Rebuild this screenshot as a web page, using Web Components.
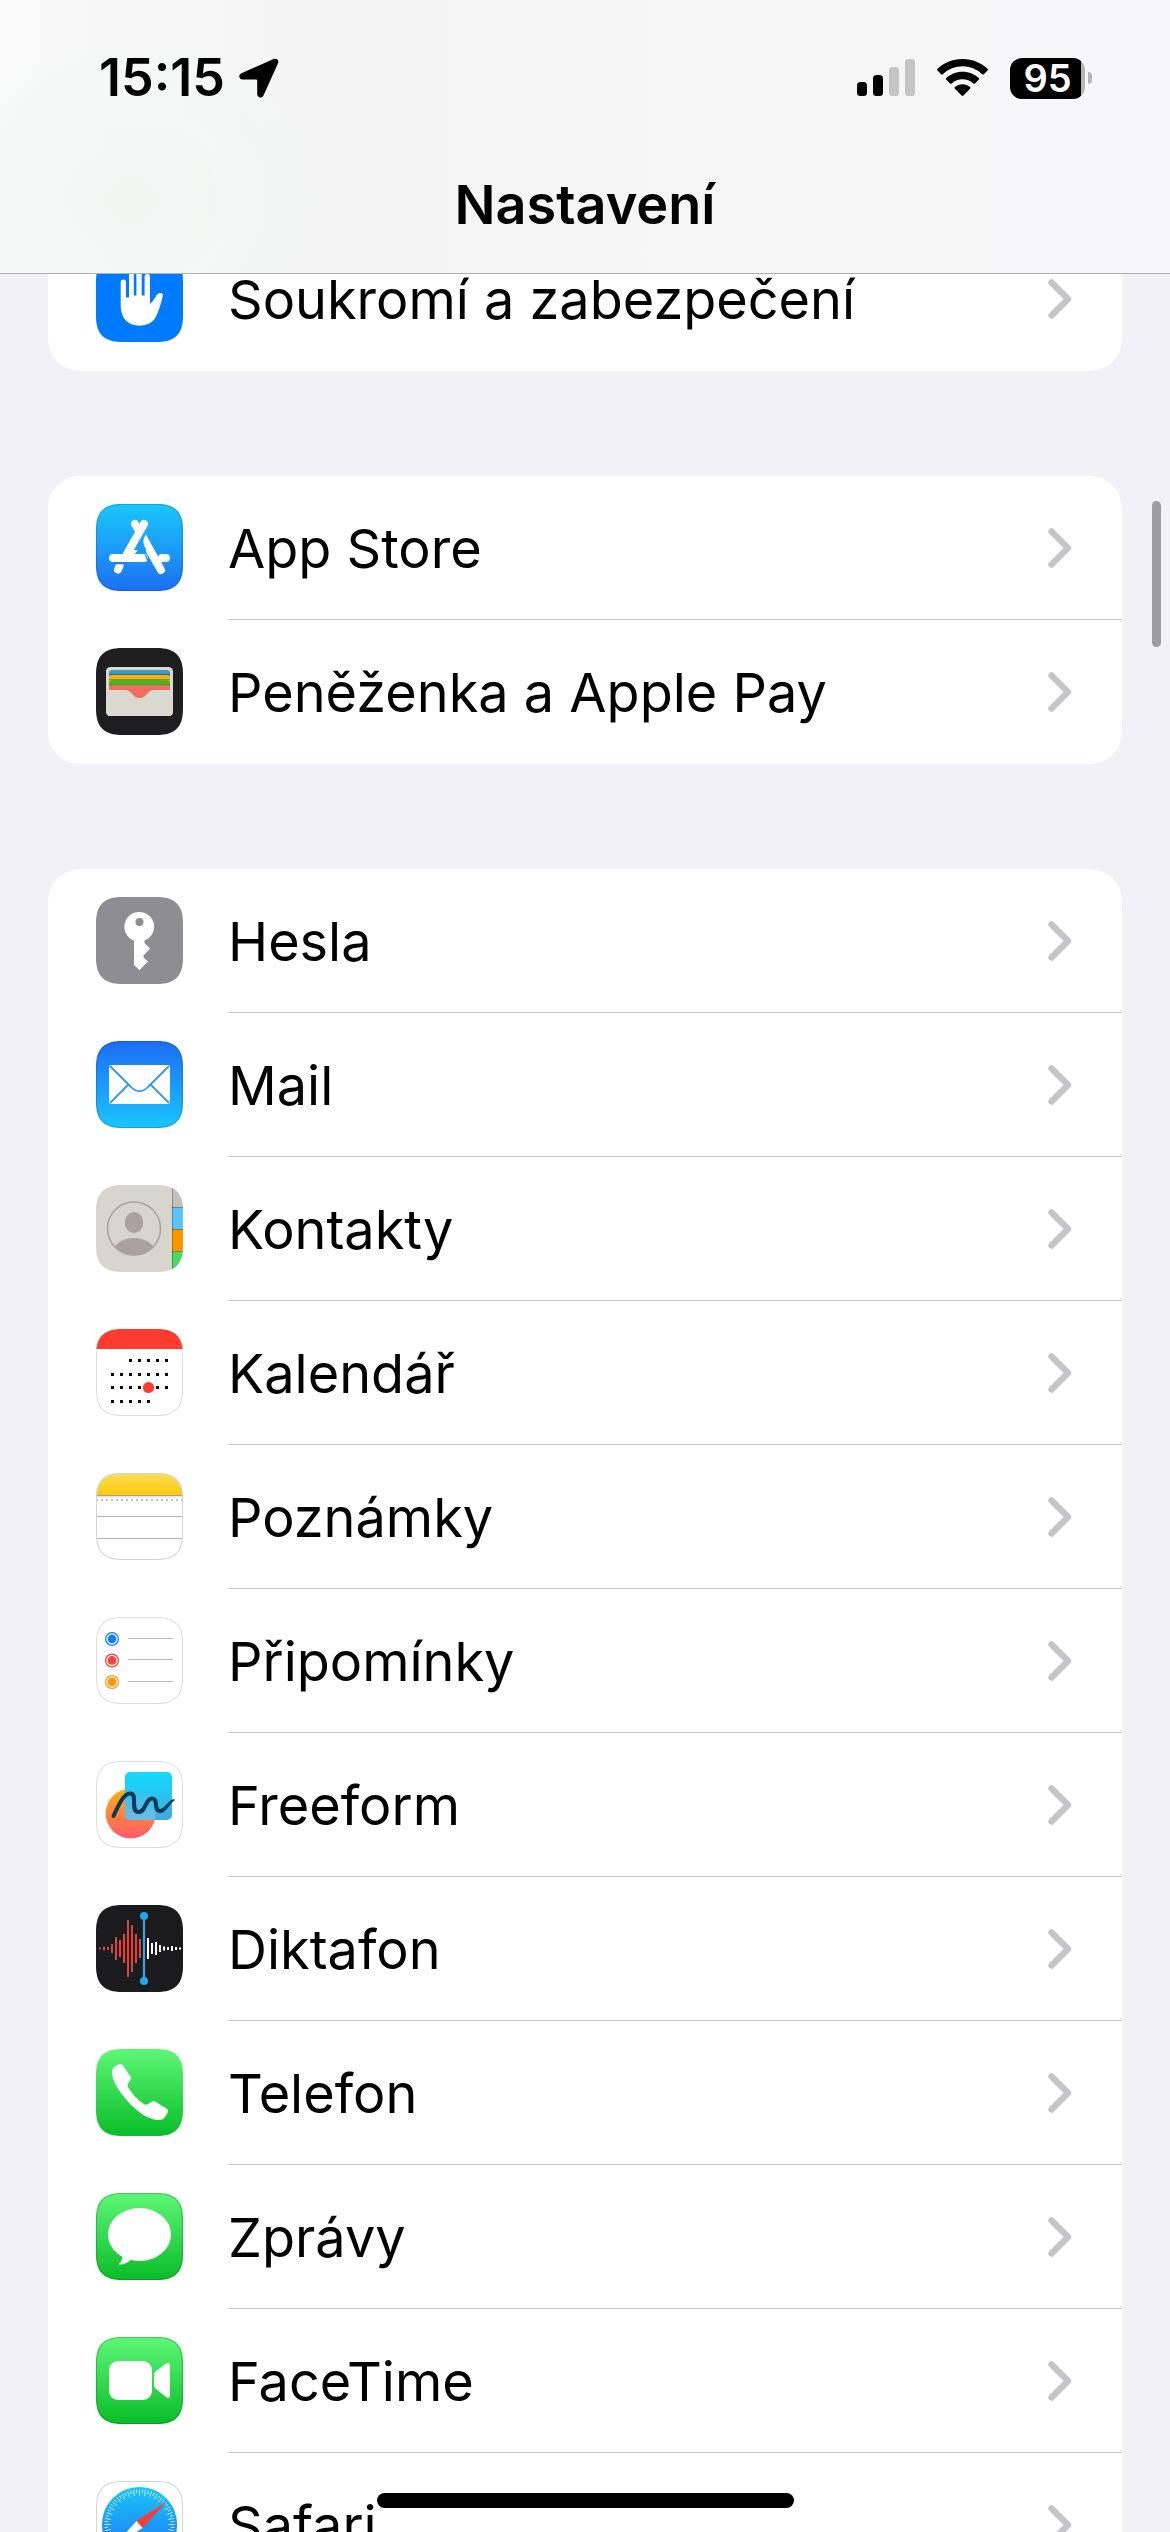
<!DOCTYPE html>
<html lang="cs">
<head>
<meta charset="utf-8">
<meta name="viewport" content="width=device-width, initial-scale=1">
<title>Nastavení</title>
<style>
  html, body { margin: 0; height: 100%; }
  body { background: #f2f1f8; color: #000; font-family: Inter, "Liberation Sans", sans-serif; overflow: hidden; }
</style>
</head>
<body>
<settings-screen>
  <status-bar slot="status" time="15:15" battery="95"></status-bar>
  <span slot="title">Nastavení</span>
  <settings-group>
    <settings-row icon="privacy">Soukromí a zabezpečení</settings-row>
  </settings-group>
  <settings-group>
    <settings-row icon="appstore">App Store</settings-row>
    <settings-row icon="wallet">Peněženka a Apple Pay</settings-row>
  </settings-group>
  <settings-group>
    <settings-row icon="passwords">Hesla</settings-row>
    <settings-row icon="mail">Mail</settings-row>
    <settings-row icon="contacts">Kontakty</settings-row>
    <settings-row icon="calendar">Kalendář</settings-row>
    <settings-row icon="notes">Poznámky</settings-row>
    <settings-row icon="reminders">Připomínky</settings-row>
    <settings-row icon="freeform">Freeform</settings-row>
    <settings-row icon="voice">Diktafon</settings-row>
    <settings-row icon="phone">Telefon</settings-row>
    <settings-row icon="messages">Zprávy</settings-row>
    <settings-row icon="facetime">FaceTime</settings-row>
    <settings-row icon="safari">Safari</settings-row>
  </settings-group>
</settings-screen>

<script>
const grad = (id, a, b) => `<linearGradient id="${id}" x1="0" y1="0" x2="0" y2="1"><stop stop-color="${a}"/><stop offset="1" stop-color="${b}"/></linearGradient>`;
const fill = c => `<rect width="87" height="87" fill="${c}"/>`;
const gfill = (a, b) => `<defs>${grad('bg', a, b)}</defs>${fill('url(#bg)')}`;

// Calendar day dots: [row y, first column, last column]
const dots = [[32, 2, 6], [46, 0, 6], [59, 0, 6], [73, 0, 4]]
  .map(([y, a, b]) => Array.from({ length: b - a + 1 }, (_, i) => `<rect x="${15 + (a + i) * 9}" y="${y - 2}" width="3" height="3"/>`).join('')).join('');

// Waveform bars, four units apart
const wave = (x0, halves, c) => halves.map((h, i) => `<rect x="${x0 + i * 4 - 1}" y="${43.5 - h}" width="2" height="${h * 2}" fill="${c}"/>`).join('');

const ticks = Array.from({ length: 72 }, (_, i) => {
  const a = i * Math.PI / 36, r = i % 2 ? 31.5 : 29;
  return `M${(43.5 + r * Math.cos(a)).toFixed(2)} ${(43.5 + r * Math.sin(a)).toFixed(2)}L${(43.5 + 35 * Math.cos(a)).toFixed(2)} ${(43.5 + 35 * Math.sin(a)).toFixed(2)}`;
}).join('');

const reminder = (y, c) => `<circle cx="16" cy="${y}" r="6.4" fill="none" stroke="${c}" stroke-width="1.3"/><circle cx="16" cy="${y}" r="4.4" fill="${c}"/><path d="M32 ${Math.floor(y) - .5}H77" stroke="#bcbcbe" stroke-width="1"/>`;

const ICONS = {
  privacy: { art: fill('#007aff') + `<path fill="#fff" d="M24.700 27.300Q24.700 24.600 27.300 24.600T30 27.300V42.500H33V18Q33 15.500 35.400 15.500T37.800 18V40.500H40.400V15.500Q40.400 13 43 13T45.700 15.500V40.500H48.600V21.500Q48.600 19 51.300 19T54 21.500V48.500C56.500 47.500 58 44 61 39.500Q63 37.300 65.400 38.300T66.500 42C65 49 62.500 56 60.300 61Q56 70.700 43.500 70.700C31.500 70.700 24.700 62.500 24.700 51Z"/>` },
  appstore: { edge: 'rgba(0,50,110,.25)', art: gfill('#1ac8fc', '#1d6ff2') + `<g fill="none" stroke="#fff" stroke-width="8" stroke-linecap="round"><path d="M48 20L31 50M39 20L43 26.500M17 54H48M66 54H70M65 66L54 46.500M23.500 62L22 65.500"/></g>
    <path fill="#fff" d="M30 46H42L37 52H26ZM50 30.500Q46 36 48 41L58 62L66 60Z"/><path d="M52.500 58L49.500 51" stroke="#1f8df7" stroke-width="1.5"/><path d="M17.500 59.200H30" stroke="#1f7ff5" stroke-width="2.200"/>` },
  wallet: { art: fill('#1e1e20') + `<rect x="10" y="19" width="67" height="49" rx="4.500" fill="#dad9cf"/>
    <path fill="#3b99c9" d="M13 42V25Q13 22 16 22H71Q74 22 74 25V42Z"/><path fill="#2f6e73" d="M13 26H74V27H13Z"/>
    <path fill="#ffb10a" d="M13 42V30Q13 27 16 27H71Q74 27 74 30V42Z"/><path fill="#a5881b" d="M13 31H74V32H13Z"/>
    <path fill="#4ab32d" d="M13 42V35Q13 32 16 32H71Q74 32 74 35V42Z"/><path fill="#8d7d2f" d="M13 36H74V37H13Z"/>
    <path fill="#f06d60" d="M13 42V40Q13 37.500 16 37.500H71Q74 37.500 74 40V52H13Z"/>
    <path fill="#dad9cf" d="M10 42H29C36 42 36 50 43.500 50S51 42 58 42H77V63.500Q77 68 72.500 68H14.500Q10 68 10 63.500Z"/>` },
  passwords: { art: fill('#8e8d94') + `<path fill="#fff" fill-rule="evenodd" d="M43.500 15A14.700 14.700 0 0 0 38 43.500V68L43.500 73L52 64.500L47.500 60.500V58.500L54 51.500L48.500 46V43.500A14.700 14.700 0 0 0 43.500 15ZM43.500 21A4 4 0 1 1 43.500 29A4 4 0 1 1 43.500 21Z"/>` },
  mail: { edge: 'rgba(0,50,110,.25)', art: gfill('#1d6cf2', '#19c6ff') + `<rect x="13" y="24" width="61" height="39" rx="2" fill="#fff"/><g fill="none" stroke="#3397e8" stroke-width="1.8"><path d="M14 25L34.500 45.500Q43.500 55 52.500 45.500L73 25M14 62L32.500 43.500M73 62L54.500 43.500"/></g>` },
  contacts: { art: fill('#d8d6cc') + `<rect x="76" width="11" height="22" fill="#c3c1bb"/><rect x="76" y="22" width="11" height="22" fill="#59c3fa"/><rect x="76" y="44" width="11" height="22" fill="#ff9500"/><rect x="76" y="66" width="11" height="21" fill="#4cd964"/>
    <path d="M76 22.500H87M76 44.500H87M76 66.500H87" stroke="#675f4c" stroke-opacity=".6"/><path d="M76.500 0V87" stroke="#000" stroke-opacity=".28"/>
    <clipPath id="ring"><circle cx="38" cy="43.500" r="27"/></clipPath><g fill="#aaa29d"><ellipse cx="38" cy="37.500" rx="9.300" ry="10.500"/><ellipse cx="38" cy="69" rx="22" ry="16" clip-path="url(#ring)"/></g><circle cx="38" cy="43.500" r="26.500" fill="none" stroke="#aaa29d" stroke-width="1.6"/>` },
  calendar: { edge: '#dedee0', art: fill('#fff') + dots + `<circle cx="52.500" cy="58.500" r="7" fill="#fff"/><circle cx="52.500" cy="58.500" r="5.600" fill="#ff3b30"/>`, top: `<rect width="87" height="20" fill="#ff3b30"/>` },
  notes: { edge: '#d4d4d6', art: fill('#fff') + `<defs>${grad('y', '#ffdc5a', '#fdca08')}</defs><rect width="87" height="22" fill="url(#y)"/><rect y="22" width="87" height="1" fill="#a8a391"/><rect y="23" width="87" height="1.500" fill="#e4e4e4"/><path d="M0 27H87" stroke="#c2c2c4" stroke-width="2" stroke-dasharray="2 3"/><path d="M0 43.500H87M0 65.500H87" stroke="#b4b4b6"/>` },
  reminders: { edge: '#dedee0', art: fill('#fff') + reminder(22, '#117df5') + reminder(43.500, '#f8423a') + reminder(65, '#fb9608') },
  freeform: { edge: '#dedee0', art: fill('#fff') + `<defs>${grad('o', '#ffaf0e', '#ff5a6c')}${grad('b', '#12dcfd', '#41a9de')}${grad('m', '#27c5ee', '#98b4dc')}<clipPath id="sq"><rect x="29" y="11" width="47" height="48" rx="5"/></clipPath></defs>
    <circle cx="34.700" cy="52.500" r="25" fill="url(#o)"/><rect x="29" y="11" width="47" height="48" rx="5" fill="url(#b)"/><circle cx="34.700" cy="52.500" r="25" fill="url(#m)" clip-path="url(#sq)"/>
    <path fill="none" stroke="#063a5b" stroke-width="4" stroke-linecap="round" stroke-linejoin="round" d="M17.500 55C23 43 28 32 34.500 32.500C42 33 34 50 42 51C50 52 49 37 56.500 37.500C63 38 57 50 64 50"/>
    <path fill="#063a5b" d="M63 52C70 53 73 43 78.800 39.200L78.500 38C72 38.500 69 48 64 48Z"/>` },
  voice: { art: fill('#1b1b1d') + `<g fill="#4a0f10"><rect x="19" y="36" width="26" height="15"/><rect x="27" y="29" width="14" height="30"/></g>` + wave(4, [1, 2, 1.5, 4.5, 11.500, 8.500, 14.500, 28.500, 23.500, 14.500, 9.500], '#c94b47') + wave(52, [10.500, 5.500, 6.500, 3.500, 2, 1.500, 2.500, 1.500, 1], '#fff') + `<path d="M48 11V76" stroke="#3ba3e3" stroke-width="2.200"/><circle cx="48" cy="11" r="4" fill="#1ca6f6"/><circle cx="48" cy="76" r="4" fill="#1ca6f6"/>` },
  phone: { art: gfill('#5df777', '#0abc28') + `<path fill="#fff" d="M16 24C15.500 19 20 16.500 23 15.300Q25.500 14.300 27 16.500L34.500 27.500Q35.500 29 34.500 30.500L32 34.500Q31 36.500 32.300 38.500Q38.500 49 48 55Q50 56.500 52 55L56 52.500Q57.500 51.500 59 52.500L70.500 59.500Q73 61.500 71.500 64C69.500 67.500 68 71 63 71C53 71 41 63 31.500 52Q16.500 35 16 24Z"/>` },
  messages: { edge: 'rgba(0,90,20,.3)', art: gfill('#5df777', '#0abc28') + `<ellipse cx="43.500" cy="41.500" rx="31.500" ry="26.500" fill="#fff"/><path fill="#fff" d="M26 61Q27.500 67 22.500 71.500Q30 72 35 66.500Z"/>` },
  facetime: { edge: 'rgba(0,90,20,.3)', art: gfill('#5df777', '#0abc28') + `<rect x="13" y="24" width="43" height="39" rx="9" fill="#fff"/><path fill="#fff" d="M58 38Q58 36 59.500 34.500L70 26.500Q74 24.500 74 29V58Q74 62.500 70 60L59.500 51.500Q58 50 58 48Z"/>` },
  safari: { edge: '#d4d4d6', art: fill('#fff') + `<defs>${grad('s', '#1bc5fb', '#1d6ff2')}</defs><circle cx="43.500" cy="43.500" r="37.600" fill="url(#s)"/><path d="${ticks}" stroke="#fff" stroke-opacity=".85" stroke-width=".9"/><path fill="#ff3b30" d="M70.500 20.500L40.500 40L46.500 47Z"/><path fill="#fff" d="M16.500 66.500L40.500 40L46.500 47Z"/>` }
};

const define = (name, html, setup) => {
  const tpl = document.createElement('template');
  tpl.innerHTML = html;
  customElements.define(name, class extends HTMLElement {
    constructor() {
      super();
      this.attachShadow({ mode: 'open' }).append(tpl.content.cloneNode(true));
    }
    connectedCallback() { if (setup) setup(this, this.shadowRoot); }
  });
};

define('settings-row', `
  <style>
    :host { display: block; }
    a { display: flex; align-items: flex-start; gap: 45px; height: 144px; padding-left: 48px; color: inherit; text-decoration: none; }
    app-icon { margin-top: 28px; }
    .body { flex: 1; min-width: 0; align-self: stretch; display: flex; align-items: center; justify-content: space-between; box-sizing: border-box; padding-right: 49px; border-bottom: 1px solid #c6c6c8; }
    :host(:last-of-type) .body { border-bottom-color: transparent; }
    .label { padding-top: 2px; font-size: 54px; line-height: 68px; white-space: nowrap; }
    svg { width: 26px; height: 42px; flex: none; }
  </style>
  <a href="#">
    <app-icon></app-icon>
    <span class="body">
      <span class="label"><slot></slot></span>
      <svg viewBox="0 0 26 42" aria-hidden="true"><path d="M4.500 4.500L21 21L4.500 37.500" fill="none" stroke="#c5c5c7" stroke-width="6.400" stroke-linecap="round" stroke-linejoin="round"/></svg>
    </span>
  </a>`,
(el, root) => root.querySelector('app-icon').setAttribute('name', el.getAttribute('icon')));

// Defined after settings-row, which names the icon before it is upgraded
define('app-icon', `
  <style>
    :host { display: block; flex: none; width: 87px; height: 87px; }
    svg { display: block; width: 100%; height: 100%; }
  </style>
  <svg viewBox="0 0 87 87" aria-hidden="true"></svg>`,
(el, root) => {
  const { art, edge, top = '' } = ICONS[el.getAttribute('name')];
  const shape = 'M0 26C0 8 8 0 26 0H61C79 0 87 8 87 26V61C87 79 79 87 61 87H26C8 87 0 79 0 61Z';
  root.querySelector('svg').innerHTML = `<clipPath id="mask"><path d="${shape}"/></clipPath><g clip-path="url(#mask)">${art}${edge ? `<path d="${shape}" fill="none" stroke="${edge}" stroke-width="2"/>` : ''}${top}</g>`;
});

define('settings-group', `
  <style>
    :host { display: block; background: #fff; border-radius: 32px; overflow: hidden; }
  </style>
  <slot></slot>`);

define('status-bar', `
  <style>
    :host { display: flex; align-items: center; justify-content: space-between; height: 156px; padding: 0 78px 0 99px; box-sizing: border-box; }
    .left, .right { display: flex; align-items: center; }
    .left { gap: 14px; }
    .right { gap: 22px; }
    .time { font-size: 52px; line-height: 60px; font-weight: 600; }
    svg { display: block; flex: none; }
    .battery { display: flex; align-items: center; gap: 3px; }
    .cell { display: flex; align-items: center; justify-content: center; width: 75px; height: 41px; border-radius: 12px; background: linear-gradient(to right, #000 71px, #b5b5b6 71px); color: #fff; font-size: 38px; line-height: 41px; font-weight: 600; }
    .nub { width: 4px; height: 12px; border-radius: 0 6px 6px 0; background: #b5b5b6; }
  </style>
  <div class="left">
    <span class="time"></span>
    <svg width="40" height="40" viewBox="0 0 40 40" aria-hidden="true"><path d="M2.500 15.300L34.500 1C37.800 -.3 40.200 2 39 5.300L24.600 37.300C23.200 40.600 18.200 40 18.200 36.300V22.700Q18.200 21.500 17 21.500H3.500C-.2 21.500 -1 17 2.500 15.300Z"/></svg>
  </div>
  <div class="right">
    <svg width="58" height="38" viewBox="0 0 58 38" aria-hidden="true"><rect y="23" width="10" height="14" rx="3.500"/><rect x="16" y="16" width="10" height="21" rx="3.500"/><g fill="#c5c5c6"><rect x="32" y="8" width="10" height="29" rx="3.500"/><rect x="48" width="10" height="37" rx="3.500"/></g></svg>
    <svg width="51" height="38" viewBox="0 0 51 38" aria-hidden="true"><path d="M25.500 0C35.500 0 44.500 4 50.500 9.800Q51.300 10.600 50.500 11.500L46.800 15.200Q46 16 45.100 15.200A28.300 28.300 0 0 0 5.900 15.200Q5 16 4.200 15.200L.5 11.500Q-.3 10.600 .5 9.800C6.500 4 15.500 0 25.500 0ZM25.500 12.700C32 12.700 37.700 15.200 41.800 19Q42.600 19.800 41.800 20.600L38 24.400Q37.200 25.200 36.300 24.400A16.400 16.400 0 0 0 14.700 24.400Q13.800 25.200 13 24.400L9.200 20.600Q8.400 19.800 9.200 19C13.300 15.200 19 12.700 25.500 12.700ZM25.500 25.200C28.500 25.200 31.200 26.300 33.100 28Q33.900 28.800 33.100 29.700L26.400 36.500Q25.500 37.300 24.600 36.500L17.900 29.700Q17.100 28.800 17.900 28C19.800 26.300 22.500 25.200 25.500 25.200Z"/></svg>
    <div class="battery"><span class="cell"></span><span class="nub"></span></div>
  </div>`,
(el, root) => {
  root.querySelector('.time').textContent = el.getAttribute('time');
  root.querySelector('.cell').textContent = el.getAttribute('battery');
});

define('settings-screen', `
  <style>
    :host { display: flex; flex-direction: column; height: 100vh; position: relative; overflow: hidden; }
    header { flex: none; border-bottom: 1px solid #b0b0b3;
      background: radial-gradient(ellipse 200px 170px at 130px 200px, #eff7f3, rgba(239,247,243,0)), linear-gradient(to right, #f9f9fa, #f4f4f4 300px, #f6f6f6 70%, #f7f7fa); }
    h1 { margin: 0; height: 117px; line-height: 98px; text-align: center; font-size: 54px; font-weight: 600; }
    main { flex: 1; min-height: 0; overflow: hidden; }
    .list { display: flex; flex-direction: column; gap: 105px; padding: 0 48px; margin-top: -47px; }
    .scroll { position: absolute; right: 9px; top: 501px; width: 9px; height: 146px; border-radius: 5px; background: #9d9ca1; }
    .home { position: absolute; left: 50%; bottom: 24px; width: 417px; height: 15px; margin-left: -208px; border-radius: 8px; background: #000; }
  </style>
  <header><slot name="status"></slot><h1><slot name="title"></slot></h1></header>
  <main><div class="list"><slot></slot></div></main>
  <div class="scroll"></div>
  <div class="home"></div>`);
</script>
</body>
</html>
